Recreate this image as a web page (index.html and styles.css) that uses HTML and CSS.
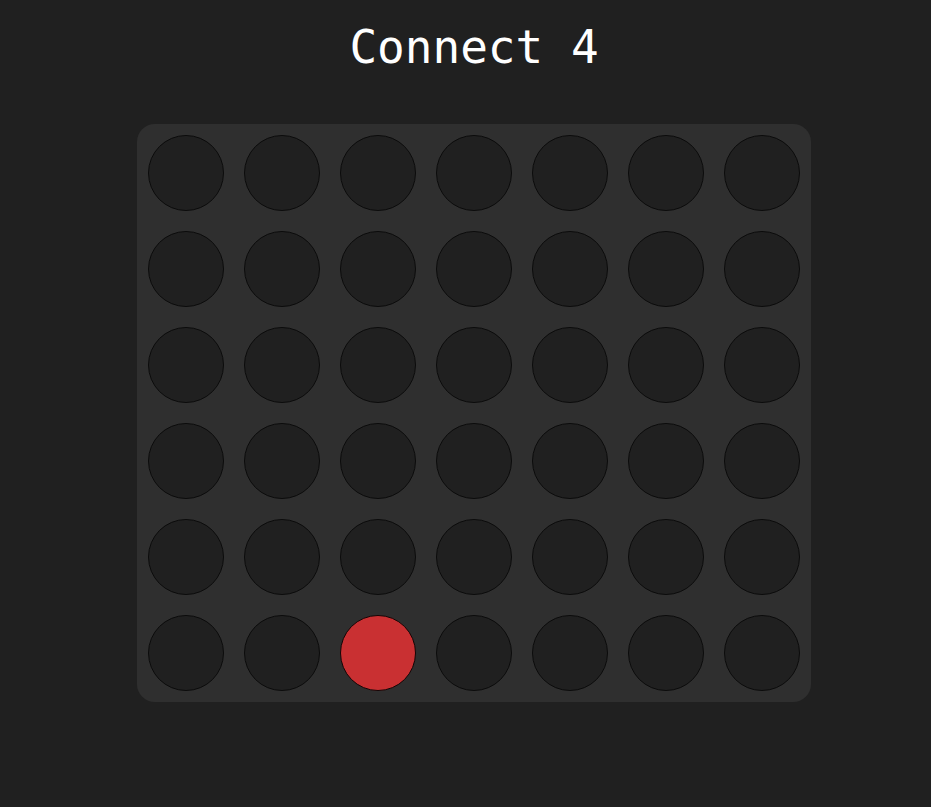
FILE: index.html
```html
<!DOCTYPE html>
<html>
<head>
<meta charset="utf-8">
<title>Connect 4</title>
<link rel="stylesheet" href="styles.css">
</head>
<body>
<main class="app">
  <h1 class="title">Connect 4</h1>
  <div class="board">
    <div class="cell"></div><div class="cell"></div><div class="cell"></div><div class="cell"></div><div class="cell"></div><div class="cell"></div><div class="cell"></div>
    <div class="cell"></div><div class="cell"></div><div class="cell"></div><div class="cell"></div><div class="cell"></div><div class="cell"></div><div class="cell"></div>
    <div class="cell"></div><div class="cell"></div><div class="cell"></div><div class="cell"></div><div class="cell"></div><div class="cell"></div><div class="cell"></div>
    <div class="cell"></div><div class="cell"></div><div class="cell"></div><div class="cell"></div><div class="cell"></div><div class="cell"></div><div class="cell"></div>
    <div class="cell"></div><div class="cell"></div><div class="cell"></div><div class="cell"></div><div class="cell"></div><div class="cell"></div><div class="cell"></div>
    <div class="cell"></div><div class="cell"></div><div class="cell red"></div><div class="cell"></div><div class="cell"></div><div class="cell"></div><div class="cell"></div>
  </div>
</main>
</body>
</html>
```
FILE: styles.css
```css
html, body {
  margin: 0;
  padding: 0;
  background: #202020;
  height: 100%;
}
.app {
  display: flex;
  flex-direction: column;
  align-items: center;
  padding-left: 17px;
  padding-top: 20px;
  font-family: "DejaVu Sans Mono", monospace;
}
.title {
  margin: 0;
  font-size: 46px;
  font-weight: normal;
  line-height: 54px;
  color: #ffffff;
}
.board {
  margin-top: 50px;
  display: grid;
  grid-template-columns: repeat(7, 76px);
  grid-auto-rows: 76px;
  gap: 20px;
  padding: 11px;
  background: #2f2f2f;
  border-radius: 18px;
}
.cell {
  box-sizing: border-box;
  border-radius: 50%;
  background: #202020;
  border: 1px solid #0b0b0b;
}
.cell.red {
  background: #c93032;
  border-color: #150505;
}
```
